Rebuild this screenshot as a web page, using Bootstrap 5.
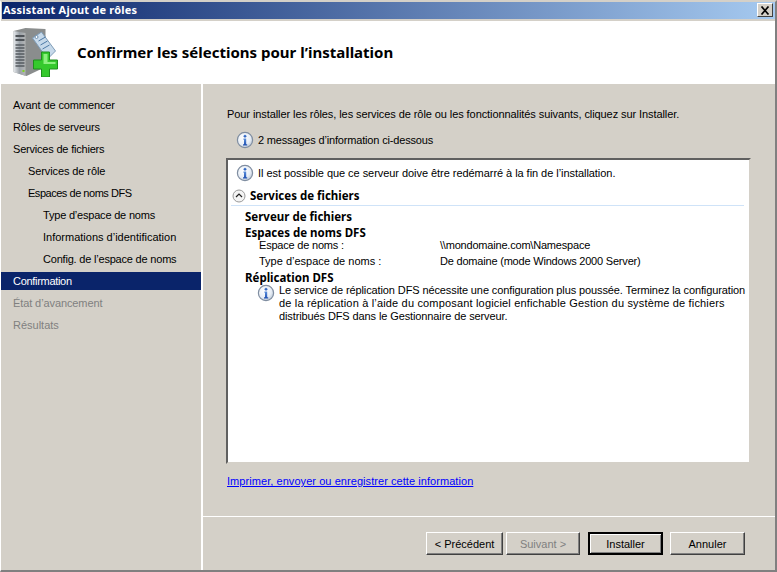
<!DOCTYPE html>
<html lang="fr"><head><meta charset="utf-8"><title>Assistant Ajout de rôles</title>
<link href="https://cdn.jsdelivr.net/npm/bootstrap@5.3.0/dist/css/bootstrap.min.css" rel="stylesheet">
<style>
html,body{margin:0;height:100%;overflow:hidden}
body{background:#d4d0c8;font-family:"Liberation Sans",sans-serif;font-size:11px;line-height:13px;color:#000}
.win{width:777px;height:572px;background:#d4d0c8;border-top:2px solid #d4d0c8;border-left:1px solid #fff;border-right:2px solid #808080;border-bottom:2px solid #808080}
.tbar{height:17px;margin-left:1px;background:linear-gradient(90deg,#0a246a,#a6caf0);padding:0 2px 0 1px}
.tbar-t{color:#fff;font-weight:700;line-height:16px;font-size:11px;font-family:"Noto Sans",sans-serif;letter-spacing:.2px}
.xbtn{width:16px;height:14px;background:#d4d0c8;border:1px solid;border-color:#fff #404040 #404040 #fff;padding:0}
.hdr{height:64px;margin-top:2px;background:#fff;padding-left:11px}
.hdr-t{font-size:15px;font-weight:700;margin-left:18px;margin-top:-1px;line-height:20px;font-family:"Noto Sans",sans-serif}
.main{height:486px}
.side{width:200px;padding-top:10px}
.vline{width:2px;background:#fff}
.nav-i{height:22px;line-height:22px;padding-left:12px;white-space:nowrap;letter-spacing:-.1px}
.ind1{padding-left:27px}.ind2{padding-left:42px}
.nav-on{background:#0a246a;color:#fff;height:18px;line-height:18px;margin:2px 0;letter-spacing:-.3px}
.nav-off{color:#808080}
.ls0{letter-spacing:0}.ls2{letter-spacing:-.2px}.ls5{letter-spacing:-.47px}
.cont{width:572px}
.cont-top{height:432px;padding:24px 0 0 24px}
.intro{height:13px;line-height:13px;white-space:nowrap;letter-spacing:-.08px}
.msgs{margin:9px 0 0 9px;height:20px;letter-spacing:-.17px}
.box{width:525px;height:306px;margin:8px 0 0 -1px;background:#fff;border:2px solid;border-color:#606060 #d4d0c8 #d4d0c8 #606060;padding:3px 5px 0 3px}
.box-l1{height:20px;padding-left:5px;letter-spacing:-.05px}
.sect{height:20px;margin-top:3px;font-weight:700;font-size:11.5px;font-family:"Noto Sans",sans-serif;border-bottom:1px solid #cfe3f8;padding-left:1px}
.sect span{margin-left:4px}
.h1x{font-weight:700;font-size:11.5px;line-height:13px;margin-left:14px;font-family:"Noto Sans",sans-serif}
.r1{margin-top:4px}.r2{margin-top:3px}
.kv{margin-left:28px;line-height:13px;padding-bottom:3px}
.kv .kk{width:181px}
.note{margin-left:26px}
.note p{margin:0 0 0 4px;line-height:13px;white-space:nowrap}
.n1{letter-spacing:-.11px}.n2{letter-spacing:.17px}.n3{letter-spacing:-.11px}
.lnk{color:#0000ff;text-decoration:underline;display:inline-block;margin-top:11px;letter-spacing:.06px}
.hl{height:1px;background:#fff;width:572px}
.foot{height:53px;padding:15px 0 0 223px}
.wbtn{height:23px;padding:0;background:#d4d0c8;border:1px solid;border-color:#fff #404040 #404040 #fff;font:inherit;color:#000;box-shadow:inset -1px -1px 0 #808080;border-radius:0;line-height:18px}
.wbtn.dis{color:#808080}
.wbtn.def{border:2px solid #000;box-shadow:inset 1px 1px 0 #fff,inset -1px -1px 0 #808080}
.w77{width:77px}.w74{width:74px;margin-left:3px}.w75a{width:75px;margin-left:8px}.w75b{width:75px;margin-left:7px}
.ico{flex:0 0 auto;display:block}
</style></head><body>
<svg width="0" height="0" class="d-block"><defs>
<radialGradient id="ib" cx=".4" cy=".35" r=".75"><stop offset="0" stop-color="#fff"/><stop offset=".6" stop-color="#e8eef6"/><stop offset="1" stop-color="#aebccc"/></radialGradient>
<linearGradient id="it" x1="0" y1="0" x2="0" y2="1"><stop offset="0" stop-color="#5a8fdc"/><stop offset="1" stop-color="#1f4fb0"/></linearGradient>
<symbol id="info" viewBox="0 0 18 18"><circle cx="9" cy="9" r="7.6" fill="url(#ib)" stroke="#7f8da0" stroke-width="1.2"/><circle cx="9" cy="5.2" r="1.4" fill="url(#it)"/><path d="M7.4 7.6h2.8v5.6h1v1.2H7v-1.2h1V8.8H7.4z" fill="url(#it)"/></symbol>
</defs></svg>
<div class="win d-flex flex-column">
<div class="tbar d-flex justify-content-between align-items-center"><span class="tbar-t">Assistant Ajout de rôles</span>
<button class="xbtn d-flex align-items-center justify-content-center" aria-label="Fermer"><svg width="10" height="9" viewBox="0 0 10 9"><path d="M1.5 .5l7 8M8.5 .5l-7 8" stroke="#000" stroke-width="1.7" fill="none"/></svg></button></div>
<div class="hdr d-flex align-items-center">
<svg width="47" height="50" viewBox="0 0 46 50" class="ico"><defs><linearGradient id="sv" x1="0" y1="0" x2="1" y2="0"><stop offset="0" stop-color="#e8ebee"/><stop offset=".5" stop-color="#9aa1a8"/><stop offset="1" stop-color="#b4b6b6"/></linearGradient></defs>
<path d="M1 4 13 1 33 2v38L14 49 1 45z" fill="#8a8d8d"/><path d="M1 4 13 6V49L1 45z" fill="url(#sv)"/><path d="M3 8h9v2H3zM3 12h9v2H3z" fill="#4e5358"/><path d="M3 18h9M3 21h9M3 24h9M3 27h9M3 30h9M3 33h9M3 36h9M3 39h9" stroke="#565b60" stroke-width="1.3"/><rect x="10" y="43" width="2" height="2" fill="#7ed321"/>
<path d="M20 11 29 5l14 19-8 8z" fill="#c6d9ea" stroke="#7f9db8"/><path d="M26 14l7-4M28 18l7-4M30 22l7-4" stroke="#4d7aa6"/><circle cx="24" cy="10" r="1.5" fill="#fff" stroke="#6f8fac"/>
<path d="M29 25h8v8h8v9h-8v8h-8v-8h-8v-9h8z" fill="#35c92c" stroke="#1f8f1c"/><path d="M31 27h4v8h8v2H31z" fill="#8cf07e"/></svg>
<div class="hdr-t">Confirmer les sélections pour l’installation</div></div>
<div class="main d-flex">
<div class="side">
<div class="nav-i">Avant de commencer</div><div class="nav-i">Rôles de serveurs</div><div class="nav-i ls2">Services de fichiers</div><div class="nav-i ind1">Services de rôle</div><div class="nav-i ind1 ls5">Espaces de noms DFS</div><div class="nav-i ind2 ls2">Type d’espace de noms</div><div class="nav-i ind2 ls0">Informations d’identification</div><div class="nav-i ind2 ls2">Config. de l’espace de noms</div>
<div class="nav-i nav-on">Confirmation</div><div class="nav-i nav-off">État d’avancement</div><div class="nav-i nav-off ls0">Résultats</div>
</div>
<div class="vline"></div>
<div class="cont">
<div class="cont-top">
<div class="intro">Pour installer les rôles, les services de rôle ou les fonctionnalités suivants, cliquez sur Installer.</div>
<div class="msgs d-flex align-items-center gap-1"><svg width="18" height="18" class="ico"><use href="#info"/></svg><span>2 messages d’information ci-dessous</span></div>
<div class="box">
<div class="box-l1 d-flex align-items-center gap-1"><svg width="18" height="18" class="ico"><use href="#info"/></svg><span>Il est possible que ce serveur doive être redémarré à la fin de l’installation.</span></div>
<div class="sect d-flex align-items-center"><svg width="14" height="14" viewBox="0 0 14 14" class="ico"><circle cx="7" cy="7" r="6" fill="#f4f4f4" stroke="#9a9a9a"/><path d="M4 8l3-3 3 3" fill="none" stroke="#222" stroke-width="1.2"/></svg><span>Services de fichiers</span></div>
<div class="h1x r1">Serveur de fichiers</div>
<div class="h1x r2">Espaces de noms DFS</div>
<div class="kv d-flex"><div class="kk"><span class="ls2">Espace de noms :</span></div><div class="ls2">\\mondomaine.com\Namespace</div></div>
<div class="kv d-flex"><div class="kk">Type d’espace de noms :</div><div class="ls2">De domaine (mode Windows 2000 Server)</div></div>
<div class="h1x">Réplication DFS</div>
<div class="note d-flex"><svg width="18" height="18" class="ico"><use href="#info"/></svg><p><span class="n1">Le service de réplication DFS nécessite une configuration plus poussée. Terminez la configuration</span><br><span class="n2">de la réplication à l’aide du composant logiciel enfichable Gestion du système de fichiers</span><br><span class="n3">distribués DFS dans le Gestionnaire de serveur.</span></p></div>
</div>
<a class="lnk" href="#">Imprimer, envoyer ou enregistrer cette information</a>
</div>
<div class="hl"></div>
<div class="foot d-flex">
<button class="wbtn w77">&lt; Précédent</button>
<button class="wbtn dis w74">Suivant &gt;</button>
<button class="wbtn def w75a">Installer</button>
<button class="wbtn w75b">Annuler</button>
</div>
</div>
</div>
</div>
</body></html>
